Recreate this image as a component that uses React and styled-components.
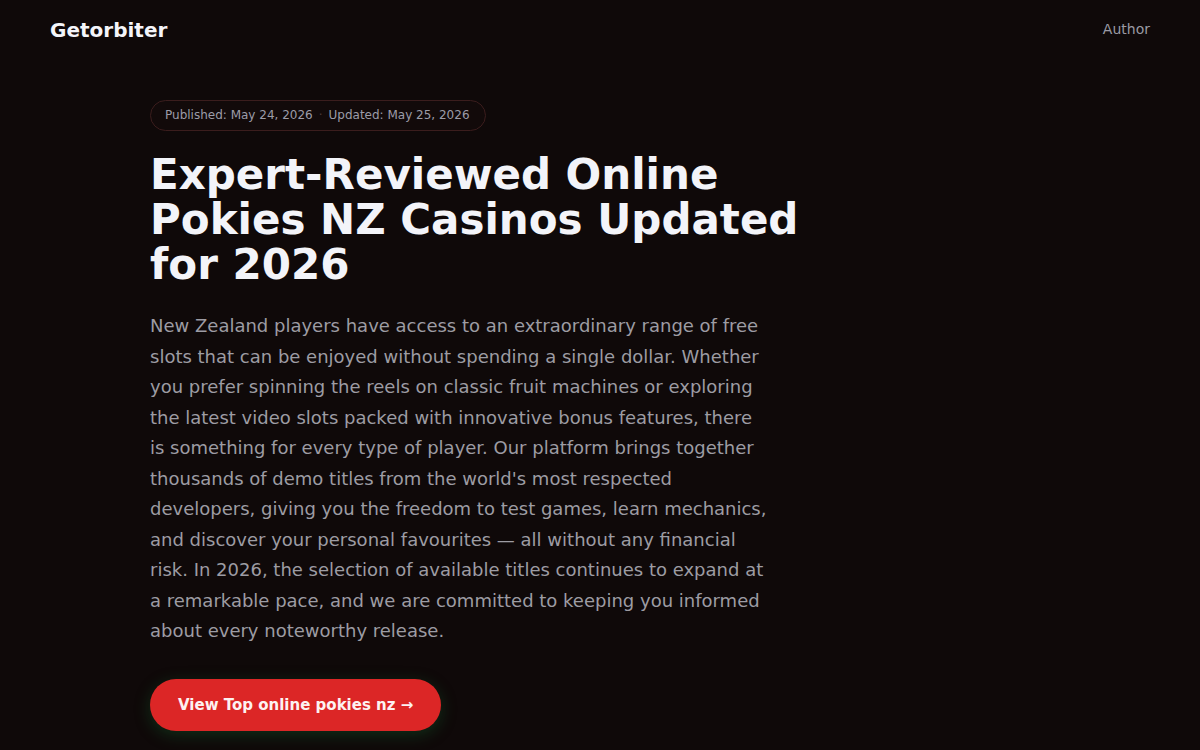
import React from "react";
import styled, { createGlobalStyle } from "styled-components";

const Global = createGlobalStyle`
  html, body { margin: 0; padding: 0; background: #0f0909; }
  body { font-family: "DejaVu Sans", "Liberation Sans", sans-serif; color: #f1f1f4; }
  * { box-sizing: border-box; }
`;

const Page = styled.div`
  min-height: 750px;
  background: #0f0909;
`;

const Header = styled.header`
  display: flex;
  align-items: center;
  justify-content: space-between;
  padding: 0 50px;
  height: 60px;
`;

const Logo = styled.div`
  font-size: 20px;
  font-weight: 700;
  color: #f4f5fa;
`;

const NavLink = styled.a`
  font-size: 14px;
  color: #9a9aa3;
  text-decoration: none;
  margin-top: -2px;
`;

const Main = styled.main`
  padding: 40px 150px 0;
`;

const Hero = styled.section`
  max-width: 660px;
  display: flex;
  flex-direction: column;
  align-items: flex-start;
`;

const Badge = styled.div`
  display: inline-flex;
  align-items: center;
  gap: 6px;
  height: 31px;
  padding: 0 15px 1px 14px;
  border: 1px solid #3b1d1d;
  border-radius: 999px;
  font-size: 12px;
  color: #9c9ca8;
  background: #120a0a;
`;

const Dot = styled.span`
  color: #4c3a3a;
`;

const Title = styled.h1`
  margin: 21px 0 0;
  font-size: 42px;
  line-height: 45px;
  font-weight: 700;
  color: #f3f4f9;
`;

const Lead = styled.p`
  margin: 24px 0 0;
  max-width: 622px;
  font-size: 18px;
  line-height: 30.55px;
  color: #9d9ca3;
`;

const Cta = styled.a`
  margin-top: 32px;
  display: inline-flex;
  align-items: center;
  justify-content: center;
  height: 52px;
  padding: 0 28px;
  border-radius: 26px;
  background: #dc2626;
  color: #fdf2f2;
  font-size: 15px;
  font-weight: 700;
  text-decoration: none;
  box-shadow: 0 4px 16px rgba(20, 100, 45, 0.4);
`;

export default function App() {
  return (
    <Page>
      <Global />
      <Header>
        <Logo>Getorbiter</Logo>
        <NavLink href="#">Author</NavLink>
      </Header>
      <Main>
        <Hero>
          <Badge>
            <span>Published: May 24, 2026</span>
            <Dot>·</Dot>
            <span>Updated: May 25, 2026</span>
          </Badge>
          <Title>Expert-Reviewed Online Pokies NZ Casinos Updated for 2026</Title>
          <Lead>
            New Zealand players have access to an extraordinary range of free slots that can be enjoyed
            without spending a single dollar. Whether you prefer spinning the reels on classic fruit
            machines or exploring the latest video slots packed with innovative bonus features, there is
            something for every type of player. Our platform brings together thousands of demo titles
            from the world's most respected developers, giving you the freedom to test games, learn
            mechanics, and discover your personal favourites — all without any financial risk. In 2026,
            the selection of available titles continues to expand at a remarkable pace, and we are
            committed to keeping you informed about every noteworthy release.
          </Lead>
          <Cta href="#">View Top online pokies nz →</Cta>
        </Hero>
      </Main>
    </Page>
  );
}
